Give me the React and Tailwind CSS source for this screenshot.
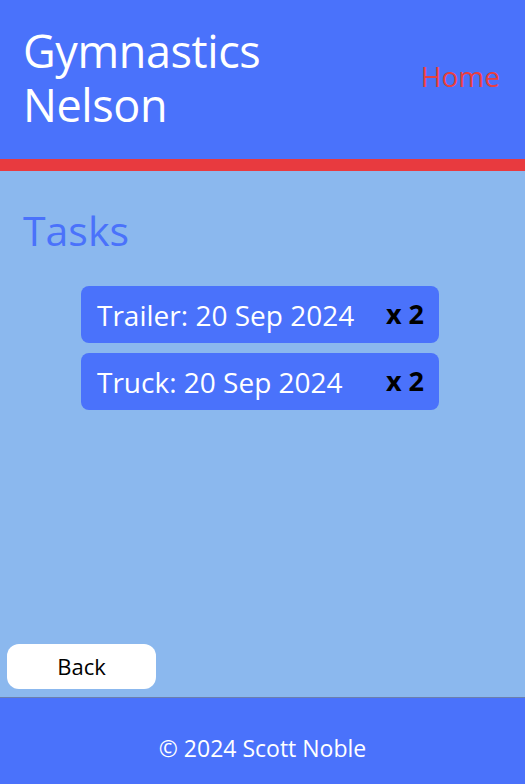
export default function App() {
  const tasks = [
    { name: "Trailer", date: "20 Sep 2024", count: 2 },
    { name: "Truck", date: "20 Sep 2024", count: 2 },
  ];

  return (
    <div className="flex flex-col min-h-screen bg-[#8bb8ee] font-['Open_Sans',sans-serif]">
      <header className="flex items-center justify-between h-[171px] pl-[23px] pr-[25px] bg-[#4a72fb] border-b-[12px] border-[#e83a3f]">
        <h1 className="text-white text-[45px] leading-[54px] tracking-[-0.4px] -mt-[4px]">
          Gymnastics
          <br />
          Nelson
        </h1>
        <a href="#" className="text-[#e8403f] text-[28px] -mt-[8px]">
          Home
        </a>
      </header>

      <main className="flex-1 flex flex-col">
        <h2 className="text-[#4a72fb] text-[41px] leading-none mt-[39px] ml-[23px]">Tasks</h2>
        <div className="flex flex-col gap-[10px] mt-[35px] ml-[81px]">
          {tasks.map((t) => (
            <div
              key={t.name}
              className="flex items-center justify-between w-[358px] h-[57px] pl-[16px] pr-[15px] rounded-[8px] bg-[#4a72fb]"
            >
              <span className="text-white text-[28px]">
                {t.name}: {t.date}
              </span>
              <span className="text-black text-[27px] font-bold">x {t.count}</span>
            </div>
          ))}
        </div>
        <div className="mt-auto mb-[8px] ml-[7px]">
          <button className="w-[149px] h-[45px] rounded-[12px] bg-white text-black text-[22px]">
            Back
          </button>
        </div>
      </main>

      <footer className="flex items-center justify-center h-[87px] pt-[14px] bg-[#4a72fb] border-t border-[#6b7fae]">
        <p className="text-white text-[23px]">© 2024 Scott Noble</p>
      </footer>
    </div>
  );
}
